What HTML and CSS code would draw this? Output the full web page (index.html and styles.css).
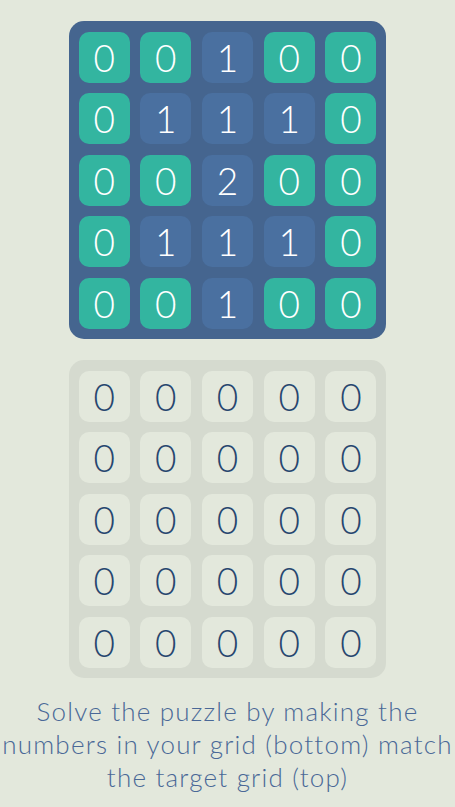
FILE: index.html
```html
<!DOCTYPE html>
<html lang="en">
<head>
    <meta charset="UTF-8">
    <meta name="viewport" content="width=device-width, initial-scale=1.0">
    <title>Match the Grid</title>
    <link rel="stylesheet" href="styles.css">
</head>
<body>
<div class="game">
    <div class="board target">
        <div class="cell zero">0</div>
        <div class="cell zero">0</div>
        <div class="cell one">1</div>
        <div class="cell zero">0</div>
        <div class="cell zero">0</div>

        <div class="cell zero">0</div>
        <div class="cell one">1</div>
        <div class="cell one">1</div>
        <div class="cell one">1</div>
        <div class="cell zero">0</div>

        <div class="cell zero">0</div>
        <div class="cell zero">0</div>
        <div class="cell one">2</div>
        <div class="cell zero">0</div>
        <div class="cell zero">0</div>

        <div class="cell zero">0</div>
        <div class="cell one">1</div>
        <div class="cell one">1</div>
        <div class="cell one">1</div>
        <div class="cell zero">0</div>

        <div class="cell zero">0</div>
        <div class="cell zero">0</div>
        <div class="cell one">1</div>
        <div class="cell zero">0</div>
        <div class="cell zero">0</div>
    </div>

    <div class="board player">
        <div class="cell">0</div><div class="cell">0</div><div class="cell">0</div><div class="cell">0</div><div class="cell">0</div>
        <div class="cell">0</div><div class="cell">0</div><div class="cell">0</div><div class="cell">0</div><div class="cell">0</div>
        <div class="cell">0</div><div class="cell">0</div><div class="cell">0</div><div class="cell">0</div><div class="cell">0</div>
        <div class="cell">0</div><div class="cell">0</div><div class="cell">0</div><div class="cell">0</div><div class="cell">0</div>
        <div class="cell">0</div><div class="cell">0</div><div class="cell">0</div><div class="cell">0</div><div class="cell">0</div>
    </div>

    <p class="hint">Solve the puzzle by making the<br>numbers in your grid (bottom) match<br>the target grid (top)</p>
</div>
</body>
</html>
```

FILE: styles.css
```css
body {
    background-color: #e3e8dc;
    margin: 0;
    font-family: Lato, "Open Sans", sans-serif;
}
.game {
    display: flex;
    flex-direction: column;
    align-items: center;
    padding-top: 21px;
}
.board {
    display: grid;
    grid-template-columns: repeat(5, 51px);
    grid-auto-rows: 51px;
    gap: 10.5px 10.7px;
    padding: 10.5px 10px;
    border-radius: 15px;
}
.target {
    background: #45658f;
}
.player {
    background: #d5dacf;
    margin-top: 21px;
}
.cell {
    display: flex;
    justify-content: center;
    align-items: center;
    border-radius: 10px;
    font-size: 37px;
    font-weight: 300;
    line-height: 1;
}
.target .cell {
    color: white;
}
.zero {
    background: #33b5a0;
}
.one {
    background: #4a70a0;
}
.player .cell {
    background: #e3e8dc;
    color: #27466f;
}
.hint {
    margin: 17px 0 0;
    color: #4a6897;
    font-size: 26px;
    font-weight: 300;
    line-height: 33px;
    letter-spacing: 1.2px;
    text-align: center;
    white-space: nowrap;
}
```
